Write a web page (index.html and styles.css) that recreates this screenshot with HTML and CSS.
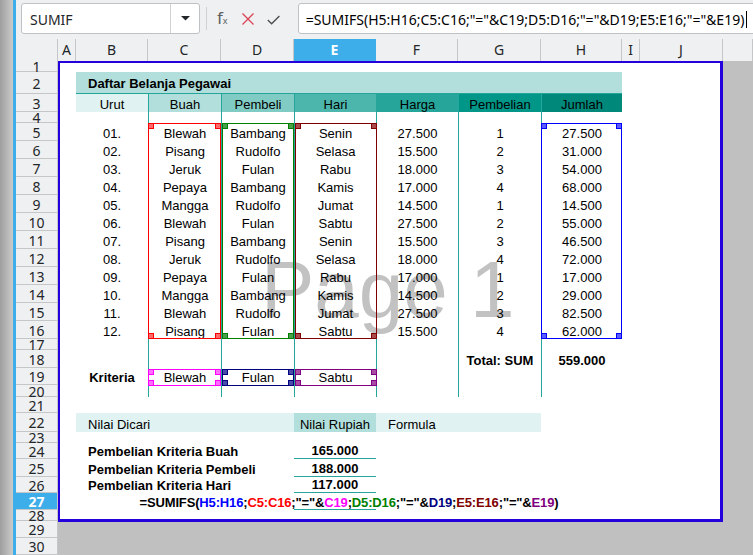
FILE: index.html
```
<!DOCTYPE html>
<html>
<head>
<meta charset="utf-8">
<link rel="stylesheet" href="styles.css">
</head>
<body>
<div class="app">
  <div class="edge"></div>
  <div class="accent"></div>
  <div class="main">
    <div class="toolbar">
      <div class="namebox">
        <span class="name">SUMIF</span>
        <span class="drop"><svg width="9" height="5" viewBox="0 0 9 5"><polygon points="0,0 9,0 4.5,4.5" fill="#232629"/></svg></span>
      </div>
      <div class="tsep"></div>
      <span class="fx">f<span class="fxs">x</span></span>
      <svg class="cancel" width="12" height="12" viewBox="0 0 12 12"><path d="M0.5 0.5 L11.5 11.5 M11.5 0.5 L0.5 11.5" stroke="#da4453" stroke-width="1.3" fill="none"/></svg>
      <svg class="accept" width="13" height="10" viewBox="0 0 13 10"><path d="M0.8 5 L4.6 8.8 L12.4 1" stroke="#4d4d4d" stroke-width="1.3" fill="none"/></svg>
      <div class="formula"><span>=SUMIFS(H5:H16;C5:C16;"="&amp;C19;D5:D16;"="&amp;D19;E5:E16;"="&amp;E19)</span><span class="caret"></span></div>
    </div>
    <div class="colheads">
      <div class="ch"></div>
      <div class="ch">A</div>
      <div class="ch">B</div>
      <div class="ch">C</div>
      <div class="ch">D</div>
      <div class="ch sel">E</div>
      <div class="ch">F</div>
      <div class="ch">G</div>
      <div class="ch">H</div>
      <div class="ch">I</div>
      <div class="ch">J</div>
      <div class="ch"></div>
    </div>
    <div class="body">
      <div class="rowheads">
        <div class="rh h11">1</div>
        <div class="rh h22">2</div>
        <div class="rh">3</div>
        <div class="rh h11">4</div>
        <div class="rh">5</div>
        <div class="rh">6</div>
        <div class="rh">7</div>
        <div class="rh">8</div>
        <div class="rh">9</div>
        <div class="rh">10</div>
        <div class="rh">11</div>
        <div class="rh">12</div>
        <div class="rh">13</div>
        <div class="rh">14</div>
        <div class="rh">15</div>
        <div class="rh">16</div>
        <div class="rh h11">17</div>
        <div class="rh">18</div>
        <div class="rh h17">19</div>
        <div class="rh h12">20</div>
        <div class="rh h16">21</div>
        <div class="rh h19">22</div>
        <div class="rh h11">23</div>
        <div class="rh h16">24</div>
        <div class="rh">25</div>
        <div class="rh h16">26</div>
        <div class="rh h17 sel">27</div>
        <div class="rh h11">28</div>
        <div class="rh h17">29</div>
        <div class="rh h17">30</div>
      </div>
      <div class="canvas">
        <div class="page">
          <div class="wm">Page 1</div>

          <div class="r h11"></div>
          <div class="r h22"><div class="c"></div><div class="c title">Daftar Belanja Pegawai</div></div>
          <div class="r">
            <div class="c"></div>
            <div class="c t0">Urut</div>
            <div class="c v t1">Buah</div>
            <div class="c v t2">Pembeli</div>
            <div class="c v t3">Hari</div>
            <div class="c v t4">Harga</div>
            <div class="c v t5">Pembelian</div>
            <div class="c v t6">Jumlah</div>
          </div>
          <div class="r h11"><div class="c"></div><div class="c"></div><div class="c v"></div><div class="c v"></div><div class="c v"></div><div class="c v"></div><div class="c v"></div><div class="c v"></div></div>

          <div class="r"><div class="c"></div><div class="c">01.</div><div class="c v">Blewah</div><div class="c v">Bambang</div><div class="c v">Senin</div><div class="c v">27.500</div><div class="c v">1</div><div class="c v">27.500</div></div>
          <div class="r"><div class="c"></div><div class="c">02.</div><div class="c v">Pisang</div><div class="c v">Rudolfo</div><div class="c v">Selasa</div><div class="c v">15.500</div><div class="c v">2</div><div class="c v">31.000</div></div>
          <div class="r"><div class="c"></div><div class="c">03.</div><div class="c v">Jeruk</div><div class="c v">Fulan</div><div class="c v">Rabu</div><div class="c v">18.000</div><div class="c v">3</div><div class="c v">54.000</div></div>
          <div class="r"><div class="c"></div><div class="c">04.</div><div class="c v">Pepaya</div><div class="c v">Bambang</div><div class="c v">Kamis</div><div class="c v">17.000</div><div class="c v">4</div><div class="c v">68.000</div></div>
          <div class="r"><div class="c"></div><div class="c">05.</div><div class="c v">Mangga</div><div class="c v">Rudolfo</div><div class="c v">Jumat</div><div class="c v">14.500</div><div class="c v">1</div><div class="c v">14.500</div></div>
          <div class="r"><div class="c"></div><div class="c">06.</div><div class="c v">Blewah</div><div class="c v">Fulan</div><div class="c v">Sabtu</div><div class="c v">27.500</div><div class="c v">2</div><div class="c v">55.000</div></div>
          <div class="r"><div class="c"></div><div class="c">07.</div><div class="c v">Pisang</div><div class="c v">Bambang</div><div class="c v">Senin</div><div class="c v">15.500</div><div class="c v">3</div><div class="c v">46.500</div></div>
          <div class="r"><div class="c"></div><div class="c">08.</div><div class="c v">Jeruk</div><div class="c v">Rudolfo</div><div class="c v">Selasa</div><div class="c v">18.000</div><div class="c v">4</div><div class="c v">72.000</div></div>
          <div class="r"><div class="c"></div><div class="c">09.</div><div class="c v">Pepaya</div><div class="c v">Fulan</div><div class="c v">Rabu</div><div class="c v">17.000</div><div class="c v">1</div><div class="c v">17.000</div></div>
          <div class="r"><div class="c"></div><div class="c">10.</div><div class="c v">Mangga</div><div class="c v">Bambang</div><div class="c v">Kamis</div><div class="c v">14.500</div><div class="c v">2</div><div class="c v">29.000</div></div>
          <div class="r"><div class="c"></div><div class="c">11.</div><div class="c v">Blewah</div><div class="c v">Rudolfo</div><div class="c v">Jumat</div><div class="c v">27.500</div><div class="c v">3</div><div class="c v">82.500</div></div>
          <div class="r"><div class="c"></div><div class="c">12.</div><div class="c v">Pisang</div><div class="c v">Fulan</div><div class="c v">Sabtu</div><div class="c v">15.500</div><div class="c v">4</div><div class="c v">62.000</div></div>

          <div class="r h11"><div class="c"></div><div class="c"></div><div class="c v"></div><div class="c v"></div><div class="c v"></div><div class="c v"></div><div class="c v"></div><div class="c v"></div></div>
          <div class="r"><div class="c"></div><div class="c"></div><div class="c v"></div><div class="c v"></div><div class="c v"></div><div class="c v"></div><div class="c v b">Total: SUM</div><div class="c v b">559.000</div></div>
          <div class="r h17"><div class="c"></div><div class="c b">Kriteria</div><div class="c v">Blewah</div><div class="c v">Fulan</div><div class="c v">Sabtu</div><div class="c v"></div><div class="c v"></div><div class="c v"></div></div>
          <div class="r h12"><div class="c"></div><div class="c"></div><div class="c v"></div><div class="c v"></div><div class="c v"></div><div class="c v"></div><div class="c v"></div><div class="c v"></div></div>

          <div class="r h16"></div>
          <div class="r h19"><div class="c"></div><div class="c l band span3">Nilai Dicari</div><div class="c band2">Nilai Rupiah</div><div class="c l band span2">Formula</div></div>
          <div class="r h11"></div>
          <div class="r h16"><div class="c"></div><div class="c l b span3">Pembelian Kriteria Buah</div><div class="c b bb">165.000</div></div>
          <div class="r"><div class="c"></div><div class="c l b span3">Pembelian Kriteria Pembeli</div><div class="c b bb">188.000</div></div>
          <div class="r h16"><div class="c"></div><div class="c l b span3">Pembelian Kriteria Hari</div><div class="c b bb">117.000</div></div>
          <div class="r h17"><div class="c bb e27"></div><div class="c b fml"><span>=SUMIFS(<span class="k1">H5:H16</span>;<span class="k2">C5:C16</span>;"="&amp;<span class="k3">C19</span>;<span class="k4">D5:D16</span>;"="&amp;<span class="k5">D19</span>;<span class="k6">E5:E16</span>;"="&amp;<span class="k7">E19</span>)</span></div></div>
          <div class="r h12"></div>

          <div class="rg rgC"><i class="hd tl"></i><i class="hd tr"></i><i class="hd bl"></i><i class="hd br"></i></div>
          <div class="rg rgD"><i class="hd tl"></i><i class="hd tr"></i><i class="hd bl"></i><i class="hd br"></i></div>
          <div class="rg rgE"><i class="hd tl"></i><i class="hd tr"></i><i class="hd bl"></i><i class="hd br"></i></div>
          <div class="rg rgH"><i class="hd tl"></i><i class="hd tr"></i><i class="hd bl"></i><i class="hd br"></i></div>
          <div class="rg rgC19"><i class="hd tl"></i><i class="hd tr"></i><i class="hd bl"></i><i class="hd br"></i></div>
          <div class="rg rgD19"><i class="hd tl"></i><i class="hd tr"></i><i class="hd bl"></i><i class="hd br"></i></div>
          <div class="rg rgE19"><i class="hd tl"></i><i class="hd tr"></i><i class="hd bl"></i><i class="hd br"></i></div>
        </div>
      </div>
    </div>
  </div>
</div>
</body>
</html>
```
FILE: styles.css
```
* { box-sizing: border-box; margin: 0; padding: 0; }
html, body { width: 753px; height: 555px; overflow: hidden; }
body { font-family: "Noto Sans", sans-serif; background: #eff0f1; color: #232629; }

.app { display: flex; height: 555px; }
.edge { width: 13px; background: linear-gradient(to right, #9e9e9e, #cbcbcb); }
.accent { width: 3px; background: #3daee9; }
.main { width: 737px; display: flex; flex-direction: column; background: #eff0f1; }

/* toolbar */
.toolbar { height: 39px; display: flex; align-items: flex-start; padding: 3px 0 0 5px; }
.namebox { width: 179px; height: 31px; background: #fff; border: 1px solid #bfc2c4; border-radius: 3px; display: flex; }
.name { flex: 1; padding: 2px 0 0 8px; font-size: 14px; line-height: 27px; }
.drop { width: 29px; border-left: 1px solid #d0d2d4; display: flex; align-items: center; justify-content: center; }
.tsep { width: 1px; height: 23px; background: #cfd1d2; margin: 4px 0 0 6px; }
.fx { margin: 5px 0 0 10px; font-size: 17px; line-height: 20px; color: #5c5f62; }
.fxs { font-size: 9px; }
.cancel { margin: 10px 0 0 14px; }
.accept { margin: 12px 0 0 13px; }
.formula { flex: 1; margin: 0 -6px 0 18px; height: 31px; background: #fff; border: 1px solid #bfc2c4; border-radius: 3px; padding: 2px 0 0 7px; font-size: 14px; line-height: 27px; white-space: nowrap; overflow: hidden; color: #000; }
.caret { display: inline-block; width: 1px; height: 17px; background: #000; margin-left: 2px; vertical-align: -3px; }

/* column headers */
.colheads { display: grid; grid-template-columns: 42px 18px 72px 73px 73px 82px 82px 83px 81px 18px 83px 1fr; height: 22px; }
.ch { border-right: 1px solid #c4c6c8; text-align: center; font-size: 14px; line-height: 22px; color: #232629; }
.ch.sel { background: #3daee9; color: #fff; font-weight: bold; border-right-color: #3daee9; }

/* body */
.body { display: flex; flex: 1; }
.rowheads { width: 42px; display: flex; flex-direction: column; }
.rh { height: 18px; flex: none; border-bottom: 1px solid #c4c6c8; border-right: 1px solid #c4c6c8; display: flex; justify-content: center; align-items: center; padding-top: 2px; font-size: 14px; line-height: 14px; color: #232629; }
.rh.sel { background: #3daee9; color: #fff; font-weight: bold; }
.canvas { flex: 1; background: #c0c0c0; }

.h11 { height: 11px; }
.h12 { height: 12px; }
.h16 { height: 16px; }
.h17 { height: 17px; }
.h19 { height: 19px; }
.h22 { height: 22px; }

/* page */
.page { position: relative; z-index: 0; width: 665px; height: 461px; background: #fff; }
.page::after { content: ""; position: absolute; inset: 0; border-style: solid; border-color: #2300dc; border-width: 2px 3px 3px 2px; z-index: 3; pointer-events: none; }
.wm { position: absolute; z-index: -1; left: 203px; top: 189px; font-family: "Liberation Sans", Arial, sans-serif; font-size: 80px; line-height: 80px; color: #c2c2c2; white-space: nowrap; }

.r { display: grid; grid-template-columns: 18px 72px 73px 73px 82px 82px 83px 81px 18px 83px; height: 18px; }
.r.h11 { height: 11px; }
.r.h12 { height: 12px; }
.r.h16 { height: 16px; }
.r.h17 { height: 17px; }
.r.h19 { height: 19px; }
.r.h22 { height: 22px; }
.c { display: flex; align-items: flex-end; justify-content: center; min-width: 0; font-family: "Liberation Sans", Arial, sans-serif; font-size: 13px; line-height: 15px; color: #000; white-space: nowrap; }
.v { border-left: 1px solid #26a69a; }
.b { font-weight: bold; }
.l { justify-content: flex-start; padding-left: 12px; }
.span2 { grid-column: span 2; }
.span3 { grid-column: span 3; }

.title { grid-column: 2 / span 7; justify-content: flex-start; padding: 0 0 2px 12px; background: #b2dfdb; border-bottom: 1px solid #26a69a; font-weight: bold; }
.t0 { background: #e0f2f1; }
.t1 { background: #b2dfdb; }
.t2 { background: #80cbc4; }
.t3 { background: #4db6ac; }
.t4 { background: #26a69a; }
.t5 { background: #009688; }
.t6 { background: #00897b; }

.band { background: #e0f2f1; }
.band2 { background: #b2dfdb; }
.bb { border-bottom: 1px solid #26a69a; line-height: 14px; }
.e27 { grid-column: 5; grid-row: 1; }
.fml { grid-column: 2 / span 7; grid-row: 1; letter-spacing: -0.15px; }
.k1 { color: #0000ff; }
.k2 { color: #ff0000; }
.k3 { color: #ff00ff; }
.k4 { color: #008000; }
.k5 { color: #000080; }
.k6 { color: #800000; }
.k7 { color: #800080; }

/* range highlight overlays */
.rg { position: absolute; border: 1px solid var(--c); }
.hd { position: absolute; width: 6px; height: 6px; border: 1px solid var(--c); background: var(--f); }
.tl { top: -1px; left: -1px; }
.tr { top: -1px; right: -1px; }
.bl { bottom: -1px; left: -1px; }
.br { bottom: -1px; right: -1px; }
.rgC { left: 90px; top: 62px; width: 73px; height: 216px; --c: #ff0000; --f: #ff6a6a; }
.rgD { left: 164px; top: 62px; width: 72px; height: 216px; --c: #008000; --f: #4aa04a; }
.rgE { left: 237px; top: 62px; width: 82px; height: 216px; --c: #800000; --f: #a84c4c; }
.rgH { left: 483px; top: 62px; width: 81px; height: 216px; --c: #0000ff; --f: #5c5cff; }
.rgC19 { left: 90px; top: 308px; width: 73px; height: 17px; --c: #ff00ff; --f: #ff6cff; }
.rgD19 { left: 164px; top: 308px; width: 72px; height: 17px; --c: #000080; --f: #4c4ca8; }
.rgE19 { left: 237px; top: 308px; width: 82px; height: 17px; --c: #800080; --f: #a84ca8; }
```
